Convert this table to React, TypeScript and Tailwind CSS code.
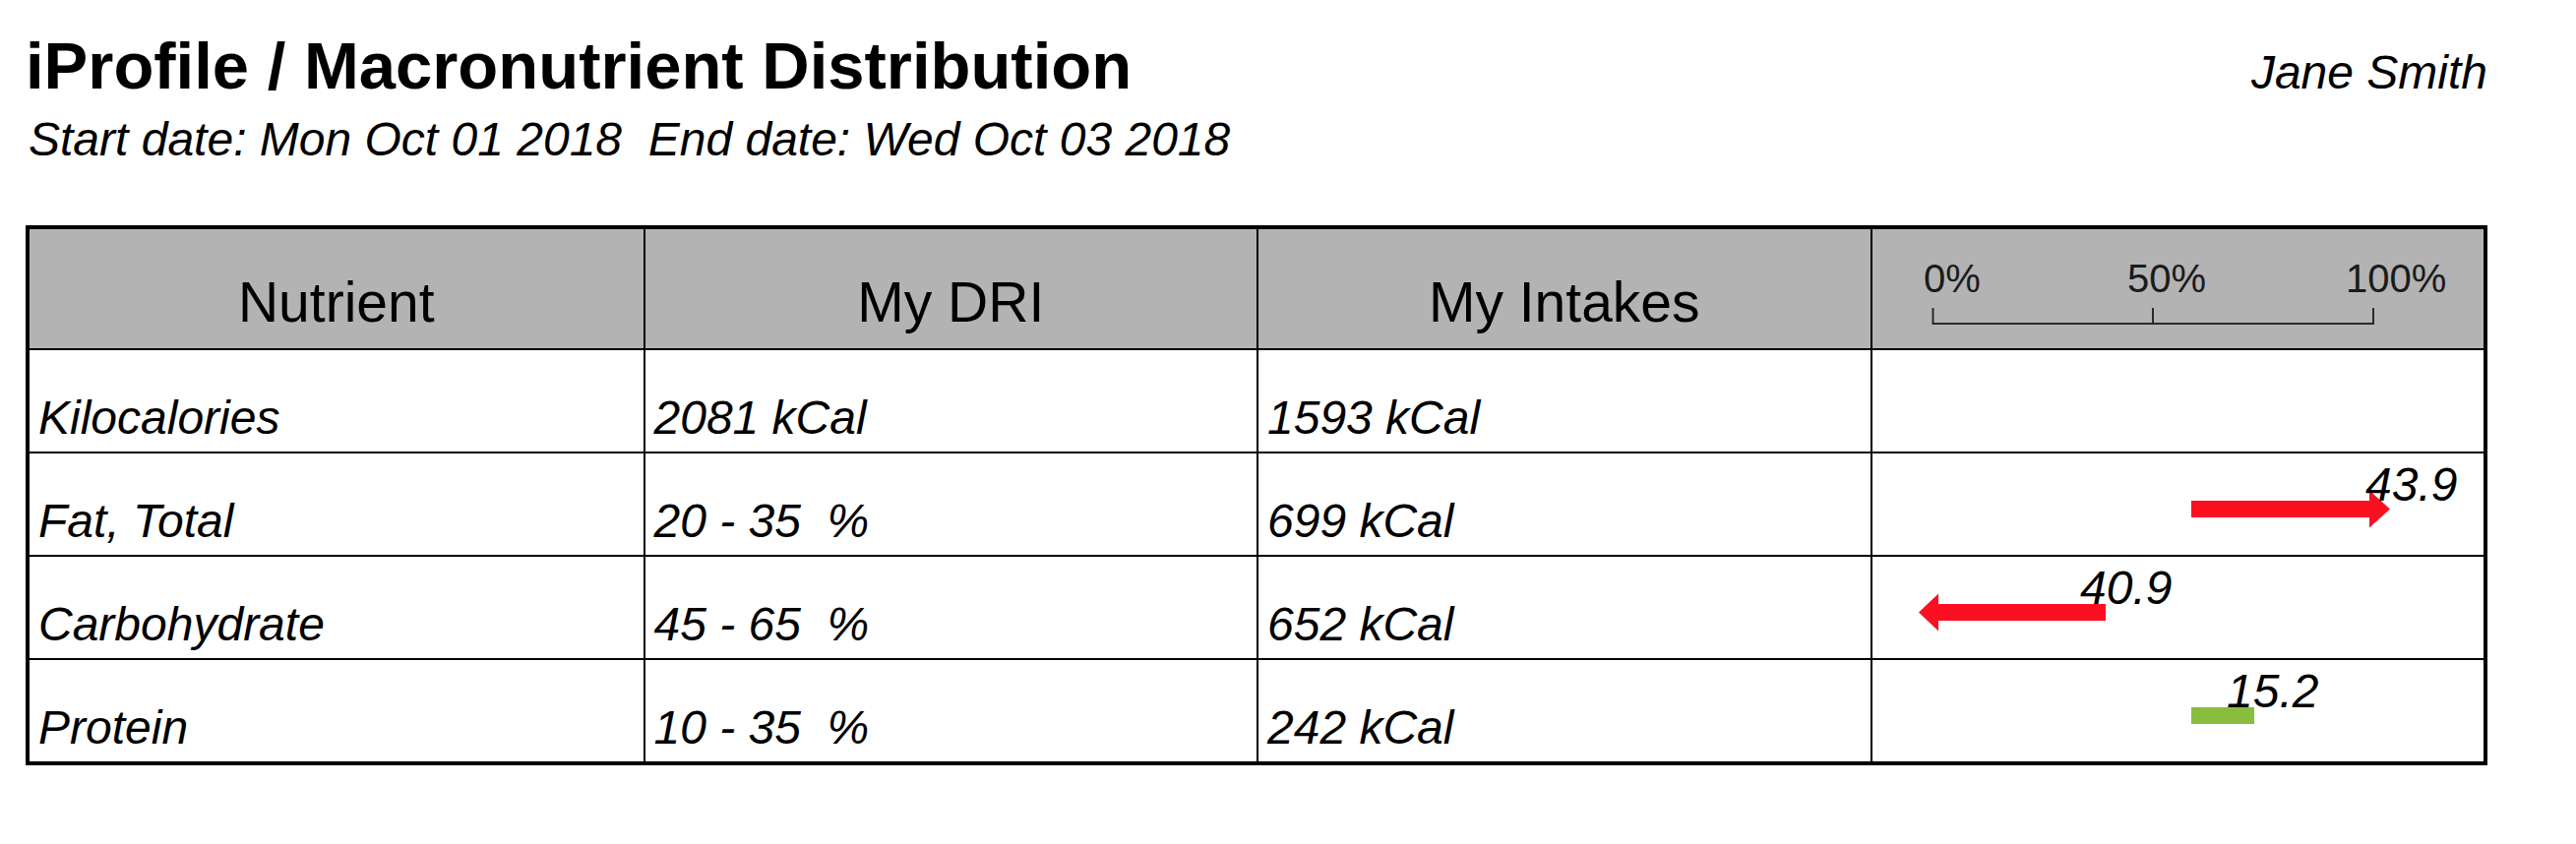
import React from 'react';

type Bar =
  | { kind: 'right'; from: number; to: number; color: string }
  | { kind: 'left'; from: number; to: number; color: string }
  | { kind: 'plain'; from: number; to: number; color: string };

type Row = {
  nutrient: string;
  dri: string;
  intake: string;
  bar?: Bar;
  label?: { x: number; text: string };
};

const rows: Row[] = [
  { nutrient: 'Kilocalories', dri: '2081 kCal', intake: '1593 kCal' },
  {
    nutrient: 'Fat, Total',
    dri: '20 - 35  %',
    intake: '699 kCal',
    bar: { kind: 'right', from: 324, to: 526, color: '#fb1022' },
    label: { x: 501, text: '43.9' },
  },
  {
    nutrient: 'Carbohydrate',
    dri: '45 - 65  %',
    intake: '652 kCal',
    bar: { kind: 'left', from: 47, to: 237, color: '#fb1022' },
    label: { x: 211, text: '40.9' },
  },
  {
    nutrient: 'Protein',
    dri: '10 - 35  %',
    intake: '242 kCal',
    bar: { kind: 'plain', from: 324, to: 388, color: '#88bd3d' },
    label: { x: 360, text: '15.2' },
  },
];

// shaft is 17px tall sitting just under the label baseline, head 38px
function barShape(bar: Bar) {
  const top = 48;
  const bottom = 65;
  const mid = 56.5;
  if (bar.kind === 'plain') {
    return <rect x={bar.from} y={top} width={bar.to - bar.from} height={bottom - top} fill={bar.color} />;
  }
  if (bar.kind === 'right') {
    const back = bar.to - 21;
    const pts = `${bar.from},${top} ${back},${top} ${back},37.5 ${bar.to},${mid} ${back},75.5 ${back},${bottom} ${bar.from},${bottom}`;
    return <polygon points={pts} fill={bar.color} />;
  }
  const back = bar.from + 20;
  const pts = `${bar.to},${top} ${back},${top} ${back},37.5 ${bar.from},${mid} ${back},75.5 ${back},${bottom} ${bar.to},${bottom}`;
  return <polygon points={pts} fill={bar.color} />;
}

function ScaleHeader() {
  return (
    <div className="relative border-l-2 border-black">
      <svg className="absolute inset-0" width="100%" height="100%">
        <g fill="#1a1a1a" fontSize={40}>
          <text x={52} y={64}>0%</text>
          <text x={259} y={64}>50%</text>
          <text x={481} y={64}>100%</text>
        </g>
        <g stroke="#2a2a2a" strokeWidth={2} fill="none">
          <line x1={61.5} y1={96} x2={509} y2={96} />
          <line x1={61.5} y1={80} x2={61.5} y2={97} />
          <line x1={285} y1={80} x2={285} y2={97} />
          <line x1={509} y1={80} x2={509} y2={97} />
        </g>
      </svg>
    </div>
  );
}

function ChartCell({ row }: { row: Row }) {
  return (
    <div className="relative border-l-2 border-black">
      {row.bar && (
        <svg className="absolute inset-0" width="100%" height="100%">
          {barShape(row.bar)}
          {row.label && (
            <text x={row.label.x} y={48} fontSize={48} fontStyle="italic" fill="#000">
              {row.label.text}
            </text>
          )}
        </svg>
      )}
    </div>
  );
}

export default function App() {
  return (
    <div className="w-[2618px] h-[858px] bg-white text-black pl-[26px] pr-[90px] pt-[33px] font-['Liberation_Sans',Arial,sans-serif]">
      <div className="flex items-baseline justify-between">
        <h1 className="text-[67px] leading-[67px] font-bold">iProfile / Macronutrient Distribution</h1>
        <div className="text-[48px] leading-[48px] italic">Jane Smith</div>
      </div>
      <div className="mt-[18px] text-[48px] leading-[48px] italic whitespace-pre pl-[3px]">
        Start date: Mon Oct 01 2018  End date: Wed Oct 03 2018
      </div>

      <div className="mt-[63px] border-4 border-black">
        {/* header */}
        <div className="grid grid-cols-4 h-[121px] bg-[#b3b3b3] text-[57px] leading-none">
          <div className="flex items-end justify-center pb-[18px]">Nutrient</div>
          <div className="flex items-end justify-center pb-[18px] border-l-2 border-black">My DRI</div>
          <div className="flex items-end justify-center pb-[18px] border-l-2 border-black">My Intakes</div>
          <ScaleHeader />
        </div>

        {rows.map((row) => (
          <div key={row.nutrient} className="grid grid-cols-4 h-[105px] border-t-2 border-black text-[48px] leading-none italic">
            <div className="flex items-end pl-[9px] pb-[10px]">{row.nutrient}</div>
            <div className="flex items-end pl-[9px] pb-[10px] border-l-2 border-black whitespace-pre">{row.dri}</div>
            <div className="flex items-end pl-[9px] pb-[10px] border-l-2 border-black">{row.intake}</div>
            <ChartCell row={row} />
          </div>
        ))}
      </div>
    </div>
  );
}
